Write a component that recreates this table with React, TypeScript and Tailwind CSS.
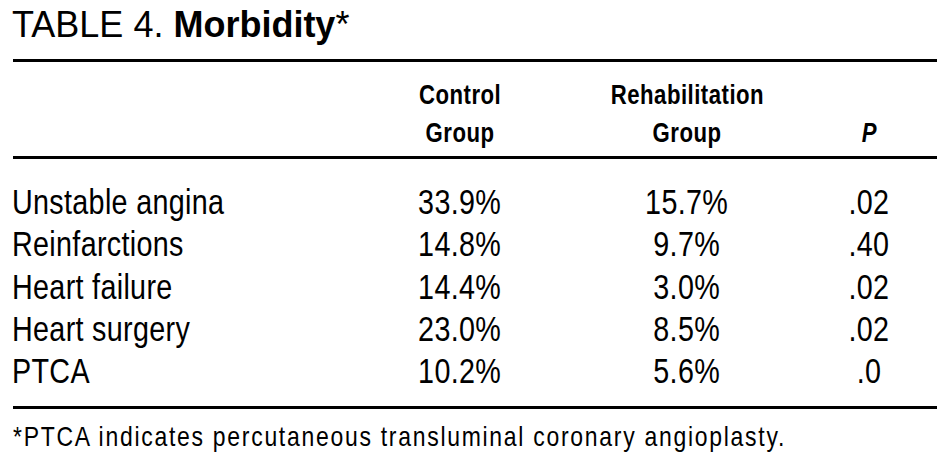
import { ReactNode } from 'react';

const rows = [
  { label: 'Unstable angina', control: '33.9%', rehab: '15.7%', p: '.02' },
  { label: 'Reinfarctions', control: '14.8%', rehab: '9.7%', p: '.40' },
  { label: 'Heart failure', control: '14.4%', rehab: '3.0%', p: '.02' },
  { label: 'Heart surgery', control: '23.0%', rehab: '8.5%', p: '.02' },
  { label: 'PTCA', control: '10.2%', rehab: '5.6%', p: '.0' },
];

// no narrow face installed, so squeeze Liberation Sans to Arial Narrow proportions
const Narrow = ({ children, left }: { children: ReactNode; left?: boolean }) => (
  <span className={`inline-block whitespace-nowrap scale-x-[0.82] ${left ? 'origin-left' : 'origin-center'}`}>
    {children}
  </span>
);

const cols = 'grid grid-cols-[334px_226px_228px_136px]';

export default function App() {
  return (
    <div className="w-[950px] h-[467px] bg-white text-black px-[13px] overflow-hidden font-['Liberation_Sans',Arial,sans-serif]">
      <h1 className="pt-[4px] text-[36px] leading-[42px] whitespace-nowrap -ml-px">
        TABLE 4. <span className="font-bold">Morbidity</span>*
      </h1>

      <div className="mt-[13px] h-[3px] bg-black" />

      <div className={`${cols} pt-[14px] pb-[4px] text-[27px] leading-[38px] font-bold tracking-[0.6px]`}>
        <div />
        <div className="flex flex-col items-center">
          <Narrow>Control</Narrow>
          <Narrow>Group</Narrow>
        </div>
        <div className="flex flex-col items-center">
          <Narrow>Rehabilitation</Narrow>
          <Narrow>Group</Narrow>
        </div>
        <div className="flex flex-col justify-end items-center italic">
          <Narrow>P</Narrow>
        </div>
      </div>

      <div className="h-[3px] bg-black" />

      <div className="pt-[22px] pb-[14px] text-[35px] leading-[42.3px] tracking-[0.4px]">
        {rows.map((r) => (
          <div key={r.label} className={cols}>
            <div className="-ml-px">
              <Narrow left>{r.label}</Narrow>
            </div>
            <div className="text-center">
              <Narrow>{r.control}</Narrow>
            </div>
            <div className="text-center">
              <Narrow>{r.rehab}</Narrow>
            </div>
            <div className="text-center">
              <Narrow>{r.p}</Narrow>
            </div>
          </div>
        ))}
      </div>

      <div className="h-[3px] bg-black" />

      <p className="mt-[11px] text-[28px] leading-[34px] tracking-[2.1px]">
        <Narrow left>*PTCA indicates percutaneous transluminal coronary angioplasty.</Narrow>
      </p>
    </div>
  );
}
